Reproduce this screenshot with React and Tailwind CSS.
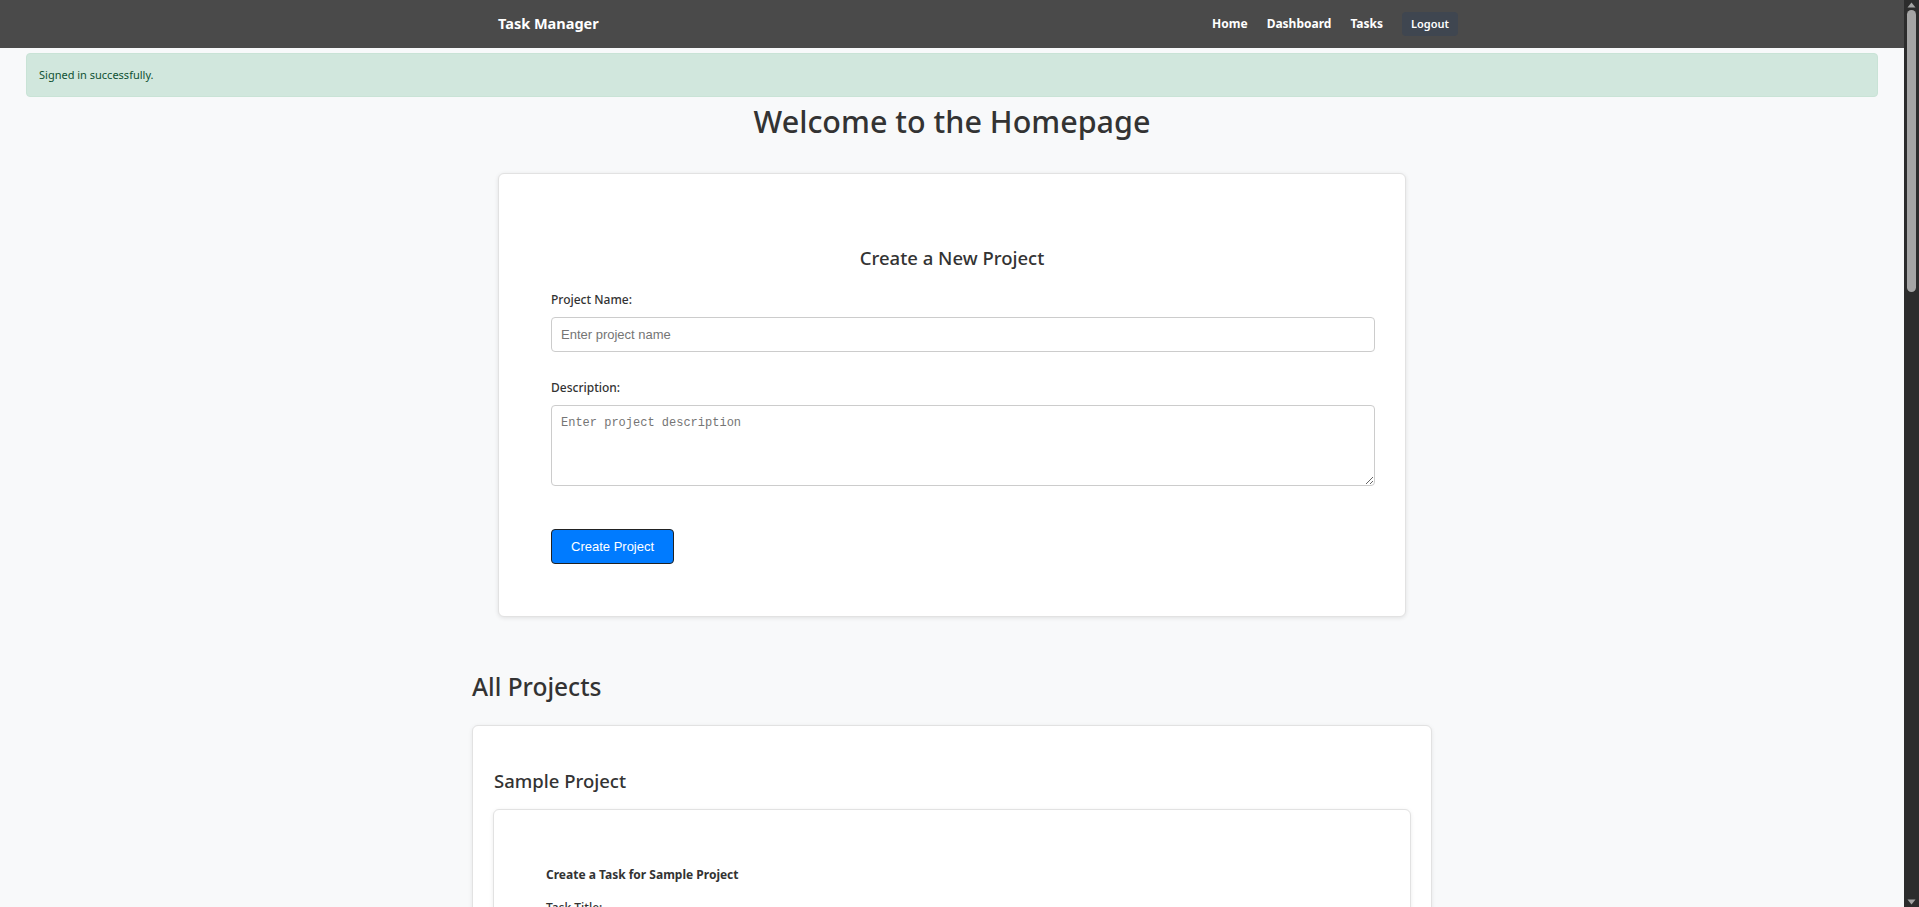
import React, { useState } from "react";

const NavLink = ({ children }) => (
  <a href="#" className="text-[12px] font-bold text-white">
    {children}
  </a>
);

const Field = ({ label, children, className = "" }) => (
  <div className={className}>
    <label className="block text-[12px] font-medium leading-[18px] text-[#333]">{label}</label>
    <div className="mt-2">{children}</div>
  </div>
);

const inputClass =
  "h-[35px] w-full rounded border border-[#ccc] bg-white px-[9px] font-['Liberation_Sans',Arial,sans-serif] text-[13px] placeholder:text-[#757575]";
const areaClass =
  "block h-[81px] w-full rounded border border-[#ccc] bg-white px-[9px] py-[8px] font-['Liberation_Mono',monospace] text-[12px] placeholder:text-[#757575]";

const TaskForm = ({ project }) => {
  const [title, setTitle] = useState("");
  const [details, setDetails] = useState("");

  return (
    <div className="rounded-md border border-[#e2e2e2] bg-white pb-[52px] pl-[52px] pr-[30px] pt-[56px] shadow-[0_1px_4px_rgba(0,0,0,0.08)]">
      <h4 className="text-[12px] font-bold leading-[18px] text-[#333]">Create a Task for {project}</h4>
      <Field label="Task Title:" className="mt-[15px]">
        <input
          type="text"
          value={title}
          onChange={(e) => setTitle(e.target.value)}
          placeholder="Enter task title"
          className={inputClass}
        />
      </Field>
      <Field label="Description:" className="mt-[27px]">
        <textarea
          value={details}
          onChange={(e) => setDetails(e.target.value)}
          placeholder="Enter task description"
          className={areaClass}
        />
      </Field>
      <Field label="Due Date:" className="mt-[27px]">
        <input type="text" placeholder="mm/dd/yyyy" className={inputClass} />
      </Field>
      <Field label="Priority:" className="mt-[27px]">
        <select className="h-[35px] w-full rounded border border-[#ccc] bg-white px-[9px] font-['Liberation_Sans',Arial,sans-serif] text-[13px]">
          <option>Low</option>
          <option>Medium</option>
          <option>High</option>
        </select>
      </Field>
      <button className="mt-[43px] flex h-[35px] items-center rounded border border-[#222] bg-[#007bff] px-[19px] font-['Liberation_Sans',Arial,sans-serif] text-[13px] text-white">
        Create Task
      </button>
    </div>
  );
};

// dark page scrollbar seen on the right edge of the screenshot
const Scrollbar = () => (
  <div className="sticky top-0 flex h-screen w-[15px] shrink-0 flex-col items-center bg-[#2c2c2c]">
    <svg width="9" height="6" viewBox="0 0 9 6" className="mt-[2px] shrink-0">
      <path d="M4.5 0.5 L8.5 5.5 L0.5 5.5 Z" fill="#a3a3a3" />
    </svg>
    <div className="mt-[2px] h-[282px] w-[9px] shrink-0 rounded-full bg-[#a5a5a5]" />
    <div className="flex-1" />
    <svg width="9" height="6" viewBox="0 0 9 6" className="mb-[2px] shrink-0">
      <path d="M0.5 0.5 L8.5 0.5 L4.5 5.5 Z" fill="#a3a3a3" />
    </svg>
  </div>
);

export default function App() {
  const [name, setName] = useState("");
  const [description, setDescription] = useState("");

  return (
    <div className="flex bg-[#f8f9fa] font-['Noto_Sans',sans-serif] text-[#333]">
      <div className="min-w-0 flex-1 pb-[1200px]">
        <nav className="h-12 bg-[#4a4a4a]">
          <div className="mx-auto flex h-full w-[960px] items-center justify-between pl-[26px]">
            <span className="text-[14.5px] font-bold text-white">Task Manager</span>
            <div className="-mr-[26px] flex items-center gap-[19px]">
              <NavLink>Home</NavLink>
              <NavLink>Dashboard</NavLink>
              <NavLink>Tasks</NavLink>
              <button className="h-6 rounded bg-[#3f4650] px-[9px] text-[11px] font-semibold text-white">Logout</button>
            </div>
          </div>
        </nav>

        <div className="mx-[26px] mt-[5px] flex h-[44px] items-center rounded border border-[#c9e3d6] bg-[#d1e7dd] px-3 text-[11px] text-[#0f5132]">
          Signed in successfully.
        </div>

        <main className="mx-auto w-[960px]">
          <h1 className="mt-[5px] text-center text-[30.5px] font-medium leading-[38px] text-[#333]">Welcome to the Homepage</h1>

          <div className="mx-[26px] mt-[33px] rounded-md border border-[#e2e2e2] bg-white pb-[52px] pl-[52px] pr-[30px] pt-[72px] shadow-[0_1px_4px_rgba(0,0,0,0.1)]">
            <h2 className="pr-[22px] text-center text-[18.5px] font-medium leading-[24px] text-[#333]">Create a New Project</h2>
            <Field label="Project Name:" className="mt-[21px]">
              <input
                type="text"
                value={name}
                onChange={(e) => setName(e.target.value)}
                placeholder="Enter project name"
                className={inputClass}
              />
            </Field>
            <Field label="Description:" className="mt-[27px]">
              <textarea
                value={description}
                onChange={(e) => setDescription(e.target.value)}
                placeholder="Enter project description"
                className={areaClass}
              />
            </Field>
            <button className="mt-[43px] flex h-[35px] items-center rounded border border-[#222] bg-[#007bff] px-[19px] font-['Liberation_Sans',Arial,sans-serif] text-[13px] text-white">
              Create Project
            </button>
          </div>

          <h2 className="mt-[54px] text-[24.5px] font-medium leading-[32px] text-[#333]">All Projects</h2>

          <div className="mt-[22px] rounded-md border border-[#e2e2e2] bg-white px-[20px] pb-[20px] pt-[43px] shadow-[0_1px_4px_rgba(0,0,0,0.08)]">
            <h3 className="pl-px text-[18.5px] font-medium leading-[24px] text-[#333]">Sample Project</h3>
            <div className="mt-[16px]">
              <TaskForm project="Sample Project" />
            </div>
            <p className="mt-4 pl-px text-[12px] text-[#666]">No tasks yet.</p>
          </div>
        </main>
      </div>
      <Scrollbar />
    </div>
  );
}
